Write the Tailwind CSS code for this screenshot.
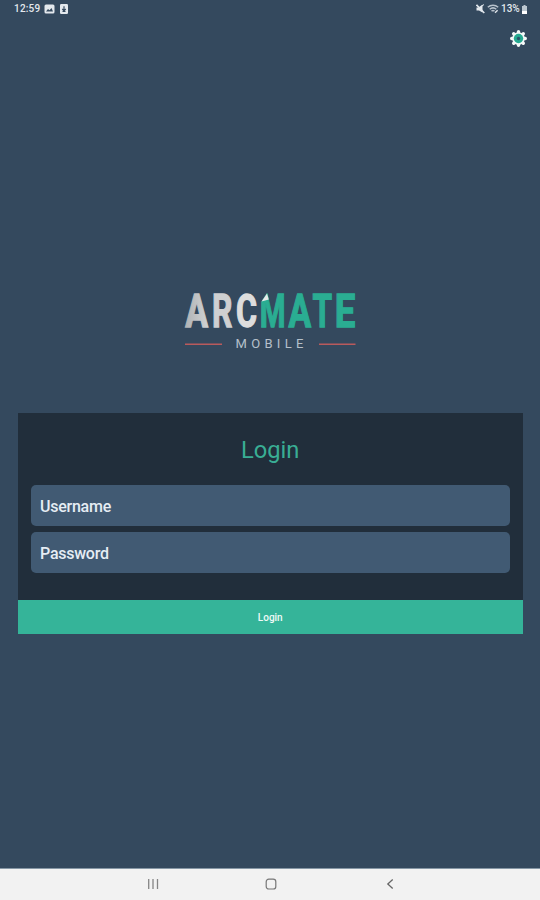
<!DOCTYPE html>
<html lang="en">
  <head>
    <meta charset="UTF-8" />
    <meta name="viewport" content="width=device-width, initial-scale=1.0" />
    <script src="https://cdn.jsdelivr.net/npm/@tailwindcss/browser@4"></script>
    <title>Arcmate Mobile</title>
  </head>
  <body class="flex flex-col h-[900px] overflow-hidden bg-[#34495e] font-[Roboto,sans-serif]">
    <!-- Status bar -->
    <header class="flex justify-between h-[18px] pl-[14px] pr-[13px] text-[10px] font-medium leading-[18px] text-[#e3e8ed]">
      <div class="flex items-center">
        <span class="w-[30px] tracking-[0.2px]">12:59</span>
        <svg class="w-[11px] h-[10px]" viewBox="0 0 11 10">
          <rect x="0.5" y="0.5" width="10" height="9" rx="1.5" fill="#e3e8ed" />
          <path d="M2 7.5l2-2.5 1.5 1.3L7.5 4 9 7.5z" fill="#34495e" />
        </svg>
        <svg class="w-[8px] h-[10px] ml-[5px]" viewBox="0 0 8 10">
          <rect width="8" height="10" rx="1.2" fill="#e3e8ed" />
          <path d="M4 2.3v4M2.3 5L4 6.8 5.7 5M2.5 7.5h3" fill="none" stroke="#34495e" stroke-width="1.2" />
        </svg>
      </div>
      <div class="flex items-center">
        <svg class="w-[9px] h-[10px] mr-[2px]" viewBox="0 0 9 10">
          <path d="M0.5 3.5h2L6.5 0.5v8L3 6.5H0.5z" fill="#e3e8ed" />
          <path d="M0.5 0.8l7.8 8.2" stroke="#e3e8ed" stroke-width="1.6" />
          <path d="M6 2l2-1.5" stroke="#e3e8ed" />
        </svg>
        <svg class="w-[12px] h-[10px] mr-[2px]" viewBox="0 0 12 10">
          <path d="M0.8 3.3C3.8.6 8.2.6 11.2 3.3M2.7 5.3c2-1.7 4.6-1.7 6.6 0M4.5 7.2c1-.8 2-.8 3 0" fill="none" stroke="#b8c2cc" stroke-width="1.5" />
          <path d="M8 8.8l2.6-2.6" stroke="#e3e8ed" stroke-width="1.3" />
        </svg>
        <span class="w-[21px]">13%</span>
        <svg class="w-[5px] h-[9px]" viewBox="0 0 5 9">
          <path d="M1.5 0h2v1H5v8H0V1h1.5z" fill="#bcc7d0" />
          <path d="M0 6h5v3H0z" fill="#fff" />
        </svg>
      </div>
    </header>

    <!-- Settings -->
    <div class="flex justify-end pt-[12px] pr-[13px]">
      <button aria-label="Settings">
        <svg class="block w-[17px] h-[17px]" viewBox="-8.5 -8.5 17 17">
          <g stroke="#f4f8f8" stroke-width="3.4" stroke-linecap="round">
            <path d="M0-6.8V6.8M-6.8 0H6.8M-4.8-4.8L4.8 4.8M-4.8 4.8L4.8-4.8" />
          </g>
          <circle r="6.3" fill="#f4f8f8" />
          <circle r="4.7" fill="#25aa91" />
          <circle r="1.7" fill="#28566a" />
        </svg>
      </button>
    </div>

    <!-- Logo -->
    <svg class="block w-[180px] h-[64px] mt-[241px] ml-[180px] shrink-0 overflow-visible" viewBox="180 288 180 64">
      <defs>
        <linearGradient id="silver">
          <stop offset="0" stop-color="#b0b3b5" />
          <stop offset="1" stop-color="#d1d3d4" />
        </linearGradient>
      </defs>
      <g font-family="Roboto, sans-serif" font-weight="700" font-size="47" stroke-width="1.3">
        <text x="185.2" y="327" fill="url(#silver)" stroke="url(#silver)" textLength="22.8" lengthAdjust="spacingAndGlyphs">A</text>
        <text x="211.9" y="327" fill="#cfd0d1" stroke="#cfd0d1" textLength="20.4" lengthAdjust="spacingAndGlyphs">R</text>
        <text x="236" y="327" fill="#dddddd" stroke="#dddddd" textLength="21" lengthAdjust="spacingAndGlyphs">C</text>
        <text x="259.8" y="327" fill="#2aad92" stroke="#2aad92" textLength="25.8" lengthAdjust="spacingAndGlyphs">M</text>
        <text x="288.4" y="327" fill="#2aad92" stroke="#2aad92" textLength="22.6" lengthAdjust="spacingAndGlyphs">A</text>
        <text x="312.6" y="327" fill="#2aad92" stroke="#2aad92" textLength="19.6" lengthAdjust="spacingAndGlyphs">T</text>
        <text x="334.7" y="327" fill="#2aad92" stroke="#2aad92" textLength="20.6" lengthAdjust="spacingAndGlyphs">E</text>
      </g>
      <!-- folded corner of the M -->
      <path d="M259.5 292h8l-6.5 10h-1.5z" fill="#34495e" />
      <path d="M267 293.5l1.8 6-7.3 2z" fill="#e8eaea" />
      <path d="M185 344.2h37M319 344.2h36.5" stroke="#b95a5c" stroke-width="1.5" />
      <text x="235.5" y="348" fill="#b5c0ca" font-family="Roboto, sans-serif" font-size="13" letter-spacing="4.3">MOBILE</text>
    </svg>

    <!-- Login form -->
    <form class="mt-[61px] ml-[17.5px] mr-[17px] bg-[#212e3b]">
      <h1 class="h-[72px] pt-[22px] text-center text-[23.7px] leading-[30px] text-[#39ad94]">Login</h1>
      <div class="flex flex-col gap-[6px] h-[115px] px-[13px]">
        <input
          type="text"
          placeholder="Username"
          class="h-[41px] px-[9.5px] pt-[2px] rounded-[5px] bg-[#415a73] text-base font-medium tracking-[-0.25px] placeholder:text-[#e6edf4]"
        />
        <input
          type="password"
          placeholder="Password"
          class="h-[41px] px-[9.5px] pt-[2px] rounded-[5px] bg-[#415a73] text-base font-medium tracking-[-0.25px] placeholder:text-[#e6edf4]"
        />
      </div>
      <button type="button" class="block w-full h-[33.5px] pt-[1px] bg-[#35b499] text-[10px] font-medium text-[#effaf7]">Login</button>
    </form>

    <!-- Navigation bar -->
    <footer class="flex items-center mt-auto h-[32.5px] border-t border-[#8697a5] bg-[#f2f2f2]">
      <svg class="w-[12px] h-[12px] ml-[147px]" viewBox="0 0 12 12">
        <path d="M1.7 1v10M6 1v10M10.5 1v10" stroke="#858585" stroke-width="1.3" />
      </svg>
      <svg class="w-[12px] h-[12px] ml-[106px]" viewBox="0 0 12 12">
        <rect x="1.2" y="1.2" width="9.6" height="9.8" rx="2.6" fill="none" stroke="#777" stroke-width="1.2" />
      </svg>
      <svg class="w-[8px] h-[12px] ml-[109px]" viewBox="0 0 8 12">
        <path d="M6.7 1.5L1.8 6l4.9 4.5" fill="none" stroke="#666" stroke-width="1.3" />
      </svg>
    </footer>
  </body>
</html>
